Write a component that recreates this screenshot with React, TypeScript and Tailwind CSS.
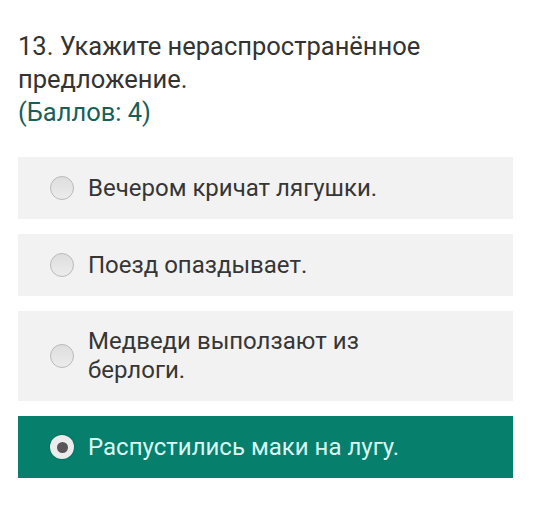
import { useState } from "react";

const options = [
    "Вечером кричат лягушки.",
    "Поезд опаздывает.",
    "Медведи выползают из берлоги.",
    "Распустились маки на лугу.",
];

function Radio({ checked }: { checked: boolean }) {
    if (checked) {
        return (
            <span className="flex h-6 w-6 shrink-0 items-center justify-center rounded-full bg-[#ececec] shadow-[0_0_2px_rgba(0,0,0,0.3)]">
                <span className="h-[11px] w-[11px] rounded-full bg-[#5a5558]" />
            </span>
        );
    }
    return (
        <span className="h-6 w-6 shrink-0 rounded-full border border-[#b9b9b9] bg-gradient-to-b from-[#dedede] to-[#ececec]" />
    );
}

export default function App() {
    const [selected, setSelected] = useState(3);

    return (
        <div className="min-h-[509px] w-[535px] bg-white px-[18px] pt-[30px] font-['Roboto',sans-serif]">
            {/* Question */}
            <div className="text-[25.5px] leading-[33px] text-[#333333]">
                <p>13. Укажите нераспространённое предложение.</p>
                <p className="text-[#17605a]">(Баллов: 4)</p>
            </div>

            {/* Answers */}
            <div className="mt-[28px] flex w-[495px] flex-col gap-[15px]">
                {options.map((text, i) => {
                    const checked = selected === i;
                    return (
                        <button
                            key={text}
                            onClick={() => setSelected(i)}
                            className={
                                checked
                                    ? "flex min-h-[62px] items-center gap-[14px] bg-[#067f6d] py-[16px] pl-[32px] text-left text-[#d9f6f1]"
                                    : "flex min-h-[62px] items-center gap-[14px] bg-[#f2f2f2] py-[16px] pl-[32px] text-left text-[#363636]"
                            }
                        >
                            <Radio checked={checked} />
                            <span className="max-w-[340px] text-[24px] leading-[29px]">{text}</span>
                        </button>
                    );
                })}
            </div>
        </div>
    );
}
